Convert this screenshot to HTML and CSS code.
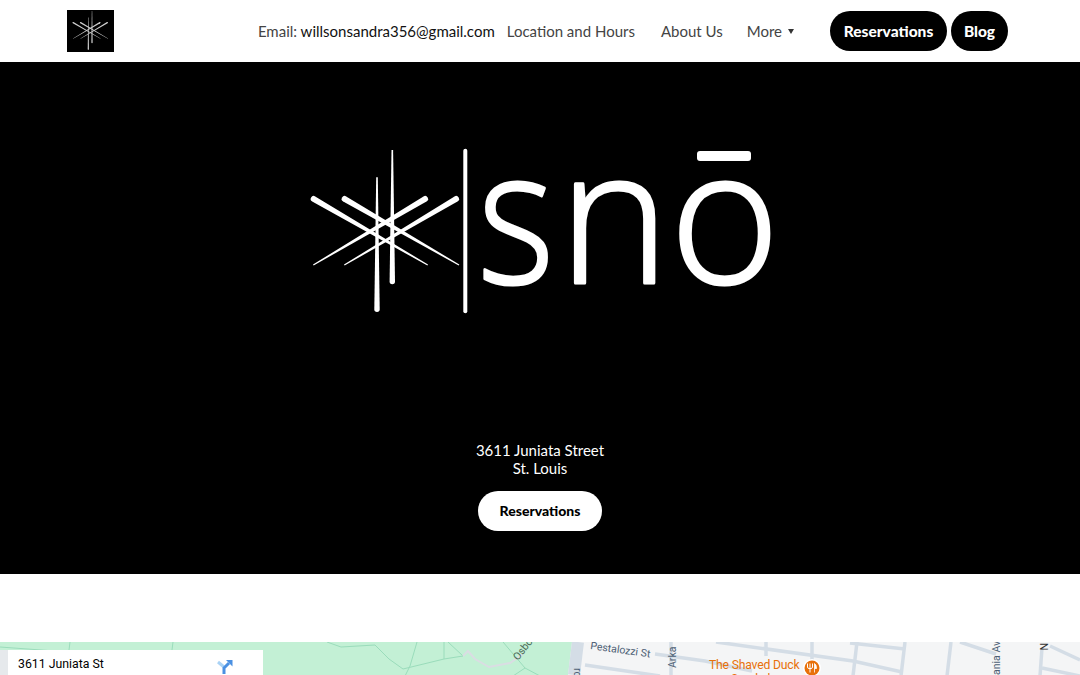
FILE: index.html
```html
<!DOCTYPE html>
<html lang="en">
<head>
  <meta charset="UTF-8">
  <meta name="viewport" content="width=device-width, initial-scale=1.0">
  <title>sno</title>
  <link rel="stylesheet" href="styles.css">
</head>
<body>
  <header class="site-header">
    <a href="#" class="brand">
      <svg class="brand-mark" viewBox="-12 6 196 175" aria-hidden="true">
        <use class="brand-star" href="#star"></use>
      </svg>
    </a>
    <nav class="main-nav">
      <a href="#" class="nav-link nav-email">Email: <span class="email-address">willsonsandra356@gmail.com</span></a>
      <a href="#" class="nav-link nav-location">Location and Hours</a>
      <a href="#" class="nav-link nav-about">About Us</a>
      <a href="#" class="nav-link nav-more">More<span class="caret"></span></a>
    </nav>
    <div class="header-buttons">
      <a href="#" class="pill pill-dark">Reservations</a>
      <a href="#" class="pill pill-dark pill-blog">Blog</a>
    </div>
  </header>

  <section class="hero">
    <svg class="hero-logo" viewBox="0 -60 480 260" role="img" aria-label="sno logo">
      <defs>
        <!-- snowflake mark, also used small in the header -->
        <g id="star" fill="#fff">
          <path d="M91.5 10h1.600L95 141.500a2.700 2.700 0 0 1-5.400 0z"/>
          <path d="M76.200 37.300h1.600L79.700 169.300a2.700 2.700 0 0 1-5.400 0z"/>
          <path d="M15.200 56.400L128 124.500L127.400 125.500L12.200 61.600A3 3 0 0 1 15.200 56.400z"/>
          <path d="M46.200 56.400L159.300 124.500L158.700 125.500L43.200 61.600A3 3 0 0 1 46.200 56.400z"/>
          <path d="M154.500 56.400L44 124.500L44.600 125.500L157.500 61.600A3 3 0 0 0 154.500 56.400z"/>
          <path d="M123.500 56.400L13 124.500L13.600 125.500L126.500 61.600A3 3 0 0 0 123.500 56.400z"/>
        </g>
        <!-- the font's macron sits too low, the logo's own bar is drawn below -->
        <clipPath id="logo-clip">
          <rect y="36" width="480" height="164"/>
        </clipPath>
      </defs>
      <use href="#star"></use>
      <rect x="163.300" y="8.700" width="4" height="164.500" rx="2" fill="#fff"/>
      <text class="logo-text" transform="translate(177.500 143) scale(0.88 1)">s</text>
      <text class="logo-text" y="143" clip-path="url(#logo-clip)"><tspan x="259">n</tspan><tspan x="370">ō</tspan></text>
      <rect x="397" y="11" width="54" height="10" rx="3" fill="#fff"/>
    </svg>
    <address class="hero-address">3611 Juniata Street<br>St. Louis</address>
    <a href="#" class="pill pill-light">Reservations</a>
  </section>

  <section class="map-section">
    <svg class="map-canvas" viewBox="0 0 1080 33" aria-hidden="true">
      <rect width="1080" height="33" fill="#f4f5f6"/>
      <path d="M0 0H572L568 33H0z" fill="#c3f0d5"/>
      <rect y="8" width="10" height="25" fill="#e6e9ec"/>

      <g class="trail">
        <path d="M0 5L48 8.500"/>
        <path d="M70 0L69 8"/>
        <path d="M173 0L172 8"/>
        <path d="M327 0L341 5L375 3L389 17L403 27L444 17L463 14"/>
        <path d="M417 0L410 24L405 34"/>
        <path d="M444 0V17M448 0L463 14"/>
        <path d="M503 0L525 26L540 34M525 26L513 34"/>
      </g>
      <path class="path-walk" d="M463 14L468 9L475 17L489 25L510 21L523 12"/>

      <path class="road road-wide" d="M578 0L574 33"/>
      <g class="road">
        <path d="M585 23L660 34"/>
        <path d="M655 12L705 19L752 29"/>
        <path d="M716 0L853 19L902 30"/>
        <path d="M850 1L905 7"/>
        <path d="M671 0V34"/>
        <path d="M766 0V14"/>
        <path d="M812 0V20"/>
        <path d="M857 0L853 34"/>
        <path d="M905 0L901 34"/>
        <path d="M951 0L947 34"/>
        <path d="M960 0L996 12"/>
        <path d="M1042 6L1040 34"/>
        <path d="M1050 4L1080 18"/>
        <path d="M1042 26L1080 34"/>
      </g>

      <text class="map-label" transform="translate(590 7) rotate(8)">Pestalozzi St</text>
      <text class="map-label" transform="translate(676 26) rotate(-90)">Arka</text>
      <text class="map-label" transform="translate(574 26) rotate(90)">rd</text>
      <text class="map-label" transform="translate(1000 33) rotate(-90)">ania Av</text>
      <text class="map-label map-label-dark" transform="translate(1040 1) rotate(90)">N</text>
      <text class="map-label map-label-park" transform="translate(518 19) rotate(-52)">Osbo</text>
      <text class="map-place" x="709" y="27">The Shaved Duck</text>
      <text class="map-place" x="731" y="41">Smokehouse</text>

      <circle cx="812" cy="26" r="9" fill="#fff"/>
      <circle cx="812" cy="26" r="7.500" fill="#e8710a"/>
      <!-- fork and knife -->
      <path d="M807.500 21.500v3.500q0 1.500 1.500 1.500h2q1.500 0 1.500-1.500v-3.500M810 21.500v9" fill="none" stroke="#fff"/>
      <path d="M814.500 30.500v-9q2 1 2 5h-2" fill="#fff" stroke="#fff" stroke-width="0.8"/>
    </svg>
    <div class="map-card">
      <span class="map-card-title">3611 Juniata St</span>
      <svg class="directions-icon" viewBox="0 0 16 14" aria-hidden="true">
        <path d="M1 2L7 7" fill="none" stroke="#a9d2f5" stroke-width="3"/>
        <path d="M7 14V8L12 3" fill="none" stroke="#4a90e2" stroke-width="3"/>
        <path d="M9 0H15.500V6.500z" fill="#4a90e2"/>
      </svg>
    </div>
  </section>
</body>
</html>
```

FILE: styles.css
```css
* {
  box-sizing: border-box;
}

body {
  margin: 0;
  font-family: 'Lato', 'Open Sans', sans-serif;
  color: #444;
  background-color: #fff;
}

a {
  text-decoration: none;
}

.site-header {
  display: flex;
  align-items: center;
  height: 62px;
  padding: 0 72px 0 67px;
}

.brand {
  display: flex;
}

.brand-mark {
  width: 47px;
  height: 42px;
  background-color: #000;
}

.brand-star {
  opacity: 0.8;
}

.main-nav {
  display: flex;
  align-items: center;
  margin-left: auto;
  font-size: 15px;
}

.nav-link {
  color: #444;
}

.email-address {
  color: #111;
}

.nav-email {
  margin-right: 12px;
}

.nav-location {
  margin-right: 26px;
}

.nav-about {
  margin-right: 24px;
}

.nav-more {
  display: flex;
  align-items: center;
}

.caret {
  width: 0;
  height: 0;
  margin-left: 6px;
  border-left: 3px solid transparent;
  border-right: 3px solid transparent;
  border-top: 5px solid #333;
}

.header-buttons {
  display: flex;
  gap: 4px;
  margin-left: 36px;
}

.pill {
  display: flex;
  align-items: center;
  justify-content: center;
  height: 40px;
  border-radius: 20px;
  font-weight: 900;
}

.pill-dark {
  width: 117px;
  background-color: #000;
  color: #fff;
  font-size: 15.500px;
}

.pill-blog {
  width: 57px;
}

.hero {
  display: flex;
  flex-direction: column;
  align-items: center;
  height: 512px;
  padding-top: 18px;
  background-color: #000;
}

.hero-logo {
  width: 480px;
  height: 260px;
}

.logo-text {
  font-family: 'Open Sans', sans-serif;
  font-size: 187px;
  font-weight: 300;
  fill: #fff;
  stroke: #fff;
  stroke-width: 3;
  stroke-linejoin: round;
}

.hero-address {
  margin-top: 101px;
  font-size: 15px;
  font-style: normal;
  line-height: 18px;
  text-align: center;
  color: #fff;
}

.pill-light {
  width: 124px;
  margin-top: 14px;
  padding-bottom: 2px;
  background-color: #fff;
  color: #000;
  font-size: 14px;
}

.map-section {
  position: relative;
  height: 33px;
  margin-top: 68px;
  overflow: hidden;
}

.map-canvas {
  display: block;
  width: 1080px;
  height: 33px;
}

.trail {
  fill: none;
  stroke: #9adcbb;
  stroke-width: 1;
}

.path-walk {
  fill: none;
  stroke: #dadde3;
  stroke-width: 2;
}

.road {
  fill: none;
  stroke: #d4dde6;
  stroke-width: 3.500;
}

.road-wide {
  stroke-width: 12;
}

.map-label {
  font-family: 'Roboto', sans-serif;
  font-size: 10.500px;
  fill: #4d5f75;
}

.map-label-dark {
  fill: #333;
}

.map-label-park {
  fill: #4a6a58;
}

.map-place {
  font-family: 'Roboto', sans-serif;
  font-size: 12.200px;
  letter-spacing: -0.2px;
  fill: #e8710a;
}

.map-card {
  position: absolute;
  top: 8px;
  left: 8px;
  display: flex;
  justify-content: space-between;
  width: 255px;
  height: 40px;
  padding: 7px 30px 0 10px;
  background-color: #fff;
}

.map-card-title {
  font-family: 'Roboto', sans-serif;
  font-size: 12.300px;
  font-weight: 400;
  color: #000;
}

.directions-icon {
  width: 16px;
  height: 14px;
  margin-top: 3px;
}
```
